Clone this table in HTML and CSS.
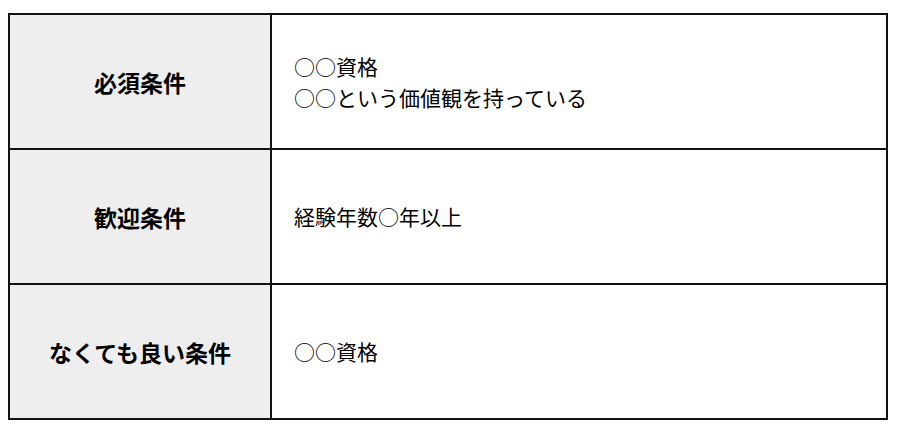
FILE: index.html
```html
<!DOCTYPE html>
<html lang="ja">
<head>
<meta charset="utf-8">
<link rel="stylesheet" href="styles.css">
</head>
<body>
<div class="conditions">
  <div class="label">必須条件</div>
  <div class="value">○○資格<br>○○という価値観を持っている</div>
  <div class="label">歓迎条件</div>
  <div class="value">経験年数○年以上</div>
  <div class="label">なくても良い条件</div>
  <div class="value">○○資格</div>
</div>
</body>
</html>
```
FILE: styles.css
```css
html, body {
  margin: 0;
  padding: 0;
  background: #ffffff;
}
body {
  padding: 13px 0 0 8px;
  font-family: "Noto Sans CJK JP", "Noto Sans", sans-serif;
  color: #000;
}
.conditions {
  display: grid;
  grid-template-columns: 262px 616px;
  grid-auto-rows: 135px;
  width: 878px;
  border-top: 2px solid #111;
  border-left: 2px solid #111;
}
.label, .value {
  border-right: 2px solid #111;
  border-bottom: 2px solid #111;
  display: flex;
  align-items: center;
}
.label {
  background: #eeeeee;
  justify-content: center;
  font-weight: 700;
  font-size: 23px;
}
.value {
  background: #ffffff;
  padding-left: 22px;
  font-size: 21px;
  line-height: 31px;
}
```
